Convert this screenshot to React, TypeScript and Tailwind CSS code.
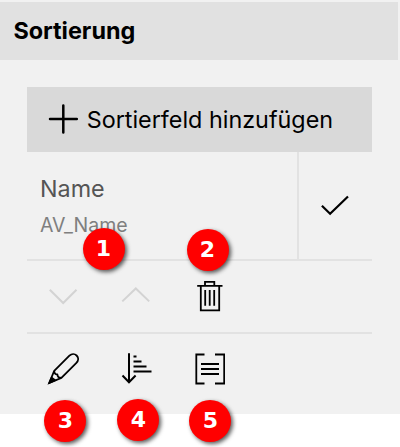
import type { ReactNode } from 'react';

function Icon({ children, color = 'text-black' }: { children: ReactNode; color?: string }) {
  return (
    <svg width="32" height="32" viewBox="0 0 32 32" fill="none" stroke="currentColor" strokeWidth="1.8" className={`block shrink-0 ${color}`}>
      {children}
    </svg>
  );
}

function Badge({ n, place }: { n: number; place: string }) {
  return (
    <span
      className={`absolute flex h-[42px] w-[42px] items-center justify-center rounded-full bg-[#ff0000] font-['DejaVu_Sans',sans-serif] text-[22px] leading-none font-bold text-white shadow-[2px_2px_4px_rgba(0,0,0,0.65)] ${place}`}
    >
      {n}
    </span>
  );
}

export default function App() {
  return (
    <div className="relative h-[447px] w-[400px] overflow-hidden bg-white font-['Inter',sans-serif]">
      <main className="h-[414px] bg-[#f1f1f1] pt-[2px]">
        <header className="flex h-[58px] w-[398px] items-center bg-[#e1e1e1] pl-[13.4px]">
          <h1 className="text-[23.4px] leading-none font-bold text-black">Sortierung</h1>
        </header>
        <section className="mt-[27px] ml-[27px] w-[345px]">
          <button className="flex h-[65px] w-full items-center bg-[#d9d9d9] pl-5 text-black">
            <svg width="32" height="32" viewBox="0 0 32 32" fill="none" stroke="currentColor" strokeWidth="2.5" strokeLinecap="round" className="block shrink-0">
              <path d="M16.3 1.5v27M3 15h26.8" />
            </svg>
            <span className="ml-[7.7px] pt-px text-[23.35px] leading-none whitespace-nowrap">Sortierfeld hinzufügen</span>
          </button>
          <div className="flex h-[109px] border-b-2 border-[#e2e2e2]">
            <div className="flex w-[270px] flex-col pt-[25px] pl-[13px]">
              <span className="text-[23.3px] leading-6 text-[#555555]">Name</span>
              <span className="mt-3 text-[19.5px] leading-6 text-[#7f7f7f]">AV_Name</span>
            </div>
            <div className="flex grow items-center justify-center border-l-2 border-[#e2e2e2]">
              <Icon>
                <path d="M1.9 15.8l8.2 8L28 6.5" strokeWidth="2.2" />
              </Icon>
            </div>
          </div>
          <div className="flex h-[73px] items-center gap-[41px] border-b-2 border-[#e2e2e2] pl-5">
            <Icon color="text-[#d3d3d3]">
              <path d="M2.8 8.8L16.2 22L29.5 8.8" strokeWidth="2" />
            </Icon>
            <Icon color="text-[#d3d3d3]">
              <path d="M2.3 20.4L15.8 7.5L29.2 20.4" strokeWidth="2" />
            </Icon>
            <Icon>
              <path d="M4.2 4.8H29.5M7.8 5V29.3H26.2V5M12 4.5V.8H21.3V4.5M12.2 9v15.8M16.7 9v15.8M21.2 9v15.8" />
            </Icon>
          </div>
          <div className="flex h-[69px] items-center gap-[41px] pl-5">
            <Icon>
              <path d="M2.2 30L7.2 17.8L22.4 2.7C24.8 .4 27.8 .7 29.6 2.5C31.5 4.4 31.8 7.4 29.4 9.8L14.4 24.9ZM7.2 17.8Q7.4 21.6 10.4 21.5Q10.5 24.9 14.4 24.9" strokeLinejoin="round" />
              <path d="M2.2 30L4.6 24.6L8.2 27.4Z" fill="currentColor" />
            </Icon>
            <Icon>
              <path d="M9 .2V29M2.5 22.5L9 29.3L15.6 22.5" strokeWidth="2" />
              <path d="M13.5 3.5h3M13.5 8.5h8M13.5 13.5h13M13.5 18.5h18" />
            </Icon>
            <Icon>
              <path d="M11.5 1.5H3.3V30.5H11.5M22 1.5H31.2V30.5H22M8 11h18M8 16h18M8 21h18" />
            </Icon>
          </div>
        </section>
      </main>
      <Badge n={1} place="left-[82.5px] top-[227.5px]" />
      <Badge n={2} place="left-[186.5px] top-[228.5px]" />
      <Badge n={3} place="left-[44.4px] top-[400.4px]" />
      <Badge n={4} place="left-[117.4px] top-[399.4px]" />
      <Badge n={5} place="left-[189.4px] top-[400.4px]" />
    </div>
  );
}
